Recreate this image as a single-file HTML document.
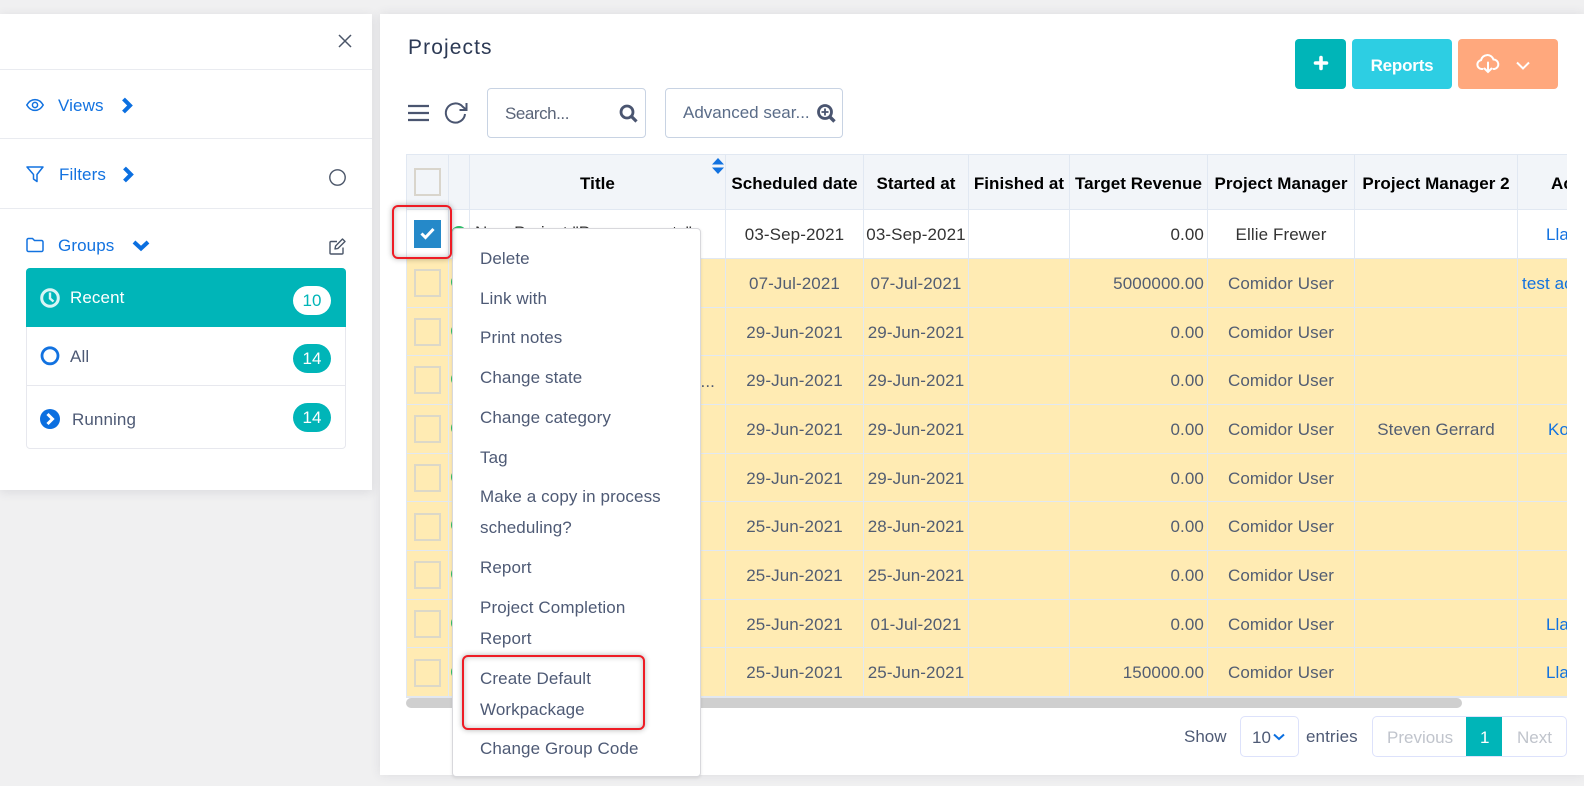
<!DOCTYPE html>
<html><head><meta charset="utf-8"><style>
*{box-sizing:border-box}
html,body{margin:0;padding:0;width:1584px;height:786px;overflow:hidden;background:#f0f0f1;font-family:"Liberation Sans",sans-serif;font-size:17px;letter-spacing:.1px;color:#4e5a75}
.a{position:absolute;white-space:nowrap;line-height:20px}
svg{position:absolute;overflow:visible}
#panel{position:absolute;left:0;top:14px;width:372px;height:476px;background:#fff;box-shadow:0 2px 10px rgba(60,60,80,.12)}
#main{position:absolute;left:380px;top:14px;width:1204px;height:761px;background:#fff;box-shadow:0 0 10px rgba(60,60,80,.1)}
.hr{position:absolute;left:0;width:372px;height:1px;background:#e9ebf0}
.blue{color:#1272e0}
.badge{position:absolute;left:293px;width:38px;height:29px;border-radius:14.5px;background:#00b5b8;color:#fff;text-align:center;line-height:29px;letter-spacing:0}
#tw{position:absolute;left:406px;top:154px;width:1161px;height:543px;overflow:hidden}
table{border-collapse:collapse;table-layout:fixed;width:1270px;position:absolute;left:0;top:0}
td,th{border:1px solid #e1e8f2;padding:0;text-align:center;white-space:nowrap;overflow:hidden;font-size:17px}
td{padding-top:2px}
th{background:#f2f5f9;color:#000;font-weight:700;height:55px;letter-spacing:.05px;padding-top:3px}
tr.w td{background:#fff;color:#333}
tr.y td{background:#ffebb3;color:#525d72}
td.r{text-align:right;padding-right:3px}
td.l{text-align:left;color:#1272e0!important}
.cb{position:absolute;left:414px;width:27px;height:28px;border:2px solid #dcd8c8;background:transparent}
.dot{position:absolute;left:451px;width:16px;height:16px;border-radius:50%;background:#2fbf6a}
#menu{position:absolute;left:452px;top:228px;width:249px;height:549px;background:#fff;border:1px solid #d8d8dc;border-radius:4px;box-shadow:0 1px 3px rgba(0,0,0,.1)}
.m{position:absolute;left:480px;white-space:nowrap;line-height:20px;color:#4e5a75}
.red{position:absolute;border:2px solid #ee1c25;border-radius:6px;box-shadow:0 0 6px rgba(0,0,0,.3),inset 0 0 6px rgba(0,0,0,.25)}
.btn{position:absolute;top:39px;height:50px;border-radius:4px;color:#fff;font-weight:700;text-align:center;line-height:53px}
.inp{position:absolute;top:88px;height:50px;border:1px solid #c8d3e3;border-radius:4px;background:#fff}
</style></head><body>
<div id="panel"></div>
<div class="hr" style="top:69px"></div><div class="hr" style="top:138px"></div><div class="hr" style="top:208px"></div>
<svg style="left:338px;top:34px" width="14" height="14" viewBox="0 0 14 14"><path d="M1 1L13 13M13 1L1 13" stroke="#4a5568" stroke-width="1.5" fill="none"/></svg>
<svg style="left:26px;top:97px" width="18" height="16" viewBox="0 0 18 16"><path d="M.8 8C3 4.2 5.8 2.6 9 2.6S15 4.2 17.2 8C15 11.8 12.2 13.400 9 13.400S3 11.800.8 8Z" fill="none" stroke="#1272e0" stroke-width="1.500"/><circle cx="9" cy="8" r="2.600" fill="none" stroke="#1272e0" stroke-width="1.500"/></svg>
<div class="a blue" style="left:58px;top:96px">Views</div>
<svg style="left:121px;top:97px" width="12" height="17" viewBox="0 0 12 17"><path d="M2.500 2L9 8.500L2.500 15" fill="none" stroke="#0b6fe0" stroke-width="4"/></svg>
<svg style="left:26px;top:166px" width="18" height="17" viewBox="0 0 18 17"><path d="M1 1H17L11 8.500V15.500L7.500 13V8.500Z" fill="none" stroke="#1272e0" stroke-width="1.500" stroke-linejoin="round"/></svg>
<div class="a blue" style="left:59px;top:165px">Filters</div>
<svg style="left:122px;top:166px" width="12" height="17" viewBox="0 0 12 17"><path d="M2.500 2L9 8.500L2.500 15" fill="none" stroke="#0b6fe0" stroke-width="4"/></svg>
<svg style="left:329px;top:169px" width="17" height="17" viewBox="0 0 17 17"><circle cx="8.500" cy="8.500" r="7.700" fill="none" stroke="#4a5568" stroke-width="1.400"/></svg>
<svg style="left:26px;top:237px" width="18" height="16" viewBox="0 0 18 16"><path d="M1 3A1.500 1.500 0 0 1 2.500 1.500H6.500L8.500 3.500H15.500A1.500 1.500 0 0 1 17 5V13A1.500 1.500 0 0 1 15.500 14.500H2.500A1.500 1.500 0 0 1 1 13Z" fill="none" stroke="#1272e0" stroke-width="1.500"/></svg>
<div class="a blue" style="left:58px;top:236px">Groups</div>
<svg style="left:132px;top:239px" width="18" height="13" viewBox="0 0 18 13"><path d="M2 3L9 9.500L16 3" fill="none" stroke="#0b6fe0" stroke-width="4"/></svg>
<svg style="left:329px;top:238px" width="17" height="17" viewBox="0 0 17 17"><path d="M14 9.500V15A1 1 0 0 1 13 16H2A1 1 0 0 1 1 15V4.500A1 1 0 0 1 2 3.500H8" fill="none" stroke="#4a5568" stroke-width="1.400"/><path d="M6 11L6.600 8L13.500 1L16 3.500L9 10.400Z" fill="none" stroke="#4a5568" stroke-width="1.400" stroke-linejoin="round"/></svg>

<div style="position:absolute;left:26px;top:268px;width:320px;height:181px;border:1px solid #e7e8ee;border-radius:4px"></div>
<div style="position:absolute;left:26px;top:268px;width:320px;height:59px;background:#00b5b8;border-radius:4px 4px 0 0"></div>
<div style="position:absolute;left:27px;top:385px;width:318px;height:1px;background:#e7e8ee"></div>
<svg style="left:40px;top:288px" width="20" height="20" viewBox="0 0 20 20"><circle cx="10" cy="10" r="8.300" fill="none" stroke="#d8f5f5" stroke-width="3"/><path d="M10 4.500V10.500L13.500 13.500" fill="none" stroke="#d8f5f5" stroke-width="2.400"/></svg>
<div class="a" style="left:70px;top:288px;color:#fff">Recent</div>
<div class="badge" style="top:286px;background:#fff;color:#00b5b8">10</div>
<svg style="left:40px;top:346px" width="20" height="20" viewBox="0 0 20 20"><circle cx="10" cy="9.800" r="8" fill="none" stroke="#1272e0" stroke-width="2.800"/></svg>
<div class="a" style="left:70px;top:347px">All</div>
<div class="badge" style="top:344px">14</div>
<svg style="left:40px;top:409px" width="20" height="20" viewBox="0 0 20 20"><circle cx="10" cy="10" r="10" fill="#0b6fe0"/><path d="M7.500 5L12.500 10L7.500 15" fill="none" stroke="#fff" stroke-width="3"/></svg>
<div class="a" style="left:72px;top:410px">Running</div>
<div class="badge" style="top:403px">14</div>

<div id="main"></div>
<div class="a" style="left:408px;top:38px;font-size:21px;letter-spacing:1.100px;color:#2d3a55">Projects</div>
<div class="btn" style="left:1295px;width:51px;background:#00b5b8"></div>
<svg style="left:1314px;top:56px" width="14" height="14" viewBox="0 0 14 14"><path d="M7 1.500V12.500M1.500 7H12.500" stroke="#fff" stroke-width="3.600" stroke-linecap="round"/></svg>
<div class="btn" style="left:1352px;width:100px;background:#2dcee3;letter-spacing:-.2px">Reports</div>
<div class="btn" style="left:1458px;width:100px;background:#ffa87d"></div>
<svg style="left:1476px;top:54px" width="24" height="20" viewBox="0 0 24 20"><path d="M6.500 15H5.500A4.500 4.500 0 0 1 5 6.100A6.500 6.500 0 0 1 17.500 5.500A4.800 4.800 0 0 1 18.500 15H17.500" fill="none" stroke="#fff" stroke-width="2" stroke-linecap="round"/><path d="M12 8.500V17.800M8.500 14.500L12 18L15.500 14.500" fill="none" stroke="#fff" stroke-width="2" stroke-linecap="round"/></svg>
<svg style="left:1516px;top:61px" width="14" height="9" viewBox="0 0 14 9"><path d="M1 1.500L7 7.500L13 1.500" fill="none" stroke="#fff" stroke-width="2"/></svg>

<svg style="left:408px;top:104px" width="21" height="18" viewBox="0 0 21 18"><path d="M0 2H21M0 9H21M0 16H21" stroke="#4a5570" stroke-width="2.300"/></svg>
<svg style="left:444px;top:101px" width="25" height="24" viewBox="0 0 25 24"><path d="M21 13A9.600 9.600 0 1 1 18.500 5.500L22 8.500" fill="none" stroke="#4a5570" stroke-width="2"/><path d="M22.500 2V9H15.500" fill="none" stroke="#4a5570" stroke-width="2"/></svg>
<div class="inp" style="left:487px;width:159px"></div>
<div class="a" style="left:505px;top:104px;color:#5a6478;letter-spacing:-.45px">Search...</div>
<svg style="left:619px;top:104px" width="19" height="19" viewBox="0 0 19 19"><circle cx="8" cy="8" r="6" fill="none" stroke="#4a5570" stroke-width="2.800"/><path d="M12.500 12.500L17.500 17.500" stroke="#4a5570" stroke-width="3.200"/></svg>
<div class="inp" style="left:665px;width:178px"></div>
<div class="a" style="left:683px;top:103px;color:#5a6c88;letter-spacing:0">Advanced sear...</div>
<svg style="left:817px;top:104px" width="19" height="19" viewBox="0 0 19 19"><circle cx="8" cy="8" r="6.500" fill="none" stroke="#4a5570" stroke-width="2.800"/><path d="M12.500 12.500L17.500 17.500" stroke="#4a5570" stroke-width="3.400"/><path d="M8 4.500V11.500M4.500 8H11.500" stroke="#4a5570" stroke-width="1.800"/></svg>

<div id="tw"><table>
<colgroup><col style="width:42px"><col style="width:21px"><col style="width:256px"><col style="width:138px"><col style="width:105px"><col style="width:101px"><col style="width:138px"><col style="width:147px"><col style="width:163px"><col style="width:159px"></colgroup>
<tr><th></th><th></th><th>Title</th><th>Scheduled date</th><th>Started at</th><th>Finished at</th><th>Target Revenue</th><th>Project Manager</th><th>Project Manager 2</th><th style="text-align:left;padding-left:33px">Actions</th></tr>
<tr class="w" style="height:49px"><td></td><td></td><td style="text-align:left;padding-left:5px;padding-top:0;padding-bottom:3px">New Project "Procurements"</td><td>03-Sep-2021</td><td>03-Sep-2021</td><td></td><td class="r">0.00</td><td>Ellie Frewer</td><td></td><td class="l" style="padding-left:28px">Llanos</td></tr>
<tr class="y" style="height:49px"><td></td><td></td><td></td><td>07-Jul-2021</td><td>07-Jul-2021</td><td></td><td class="r">5000000.00</td><td>Comidor User</td><td></td><td class="l" style="padding-left:4px">test account</td></tr>
<tr class="y" style="height:48px"><td></td><td></td><td></td><td>29-Jun-2021</td><td>29-Jun-2021</td><td></td><td class="r">0.00</td><td>Comidor User</td><td></td><td></td></tr>
<tr class="y" style="height:49px"><td></td><td></td><td style="text-align:right;padding-right:10px;padding-top:4px">...</td><td>29-Jun-2021</td><td>29-Jun-2021</td><td></td><td class="r">0.00</td><td>Comidor User</td><td></td><td></td></tr>
<tr class="y" style="height:49px"><td></td><td></td><td></td><td>29-Jun-2021</td><td>29-Jun-2021</td><td></td><td class="r">0.00</td><td>Comidor User</td><td>Steven Gerrard</td><td class="l" style="padding-left:30px">Kostas</td></tr>
<tr class="y" style="height:48px"><td></td><td></td><td></td><td>29-Jun-2021</td><td>29-Jun-2021</td><td></td><td class="r">0.00</td><td>Comidor User</td><td></td><td></td></tr>
<tr class="y" style="height:49px"><td></td><td></td><td></td><td>25-Jun-2021</td><td>28-Jun-2021</td><td></td><td class="r">0.00</td><td>Comidor User</td><td></td><td></td></tr>
<tr class="y" style="height:49px"><td></td><td></td><td></td><td>25-Jun-2021</td><td>25-Jun-2021</td><td></td><td class="r">0.00</td><td>Comidor User</td><td></td><td></td></tr>
<tr class="y" style="height:48px"><td></td><td></td><td></td><td>25-Jun-2021</td><td>01-Jul-2021</td><td></td><td class="r">0.00</td><td>Comidor User</td><td></td><td class="l" style="padding-left:28px">Llanos</td></tr>
<tr class="y" style="height:49px"><td></td><td></td><td></td><td>25-Jun-2021</td><td>25-Jun-2021</td><td></td><td class="r">150000.00</td><td>Comidor User</td><td></td><td class="l" style="padding-left:28px">Llanos</td></tr>
</table></div>
<svg style="left:711px;top:158px" width="14" height="16" viewBox="0 0 14 16"><path d="M7 0L13 6.500H1ZM1 9.500H13L7 16Z" fill="#1272e0"/></svg>

<div class="cb" style="top:168px;border-color:#d9d5cc"></div>
<div class="cb" style="top:220px;background:#2589c9;border-color:#2589c9"></div>
<svg style="left:420px;top:227px" width="15" height="13" viewBox="0 0 15 13"><path d="M1.500 6.500L5.500 10.500L13.500 2" fill="none" stroke="#fff" stroke-width="3"/></svg>
<div class="cb" style="top:269px"></div><div class="cb" style="top:318px"></div><div class="cb" style="top:366px"></div><div class="cb" style="top:415px"></div><div class="cb" style="top:464px"></div><div class="cb" style="top:513px"></div><div class="cb" style="top:561px"></div><div class="cb" style="top:610px"></div><div class="cb" style="top:659px"></div>
<div class="dot" style="top:226px"></div><div class="dot" style="top:274px"></div><div class="dot" style="top:323px"></div><div class="dot" style="top:371px"></div><div class="dot" style="top:420px"></div><div class="dot" style="top:469px"></div><div class="dot" style="top:517px"></div><div class="dot" style="top:566px"></div><div class="dot" style="top:615px"></div><div class="dot" style="top:664px"></div>

<div style="position:absolute;left:406px;top:697px;width:1161px;height:1px;background:#e3e7ee"></div>
<div style="position:absolute;left:406px;top:698px;width:1056px;height:10px;background:#cfcfcf;border-radius:5px"></div>

<div class="a" style="left:1184px;top:727px;letter-spacing:0">Show</div>
<div style="position:absolute;left:1240px;top:716px;width:59px;height:41px;border:1px solid #dde2fb;border-radius:5px"></div>
<div class="a" style="left:1252px;top:728px;letter-spacing:0">10</div>
<svg style="left:1273px;top:733px" width="12" height="8" viewBox="0 0 12 8"><path d="M1 1.500L6 6L11 1.500" fill="none" stroke="#0b6fe0" stroke-width="2"/></svg>
<div class="a" style="left:1306px;top:727px;letter-spacing:.1px">entries</div>
<div style="position:absolute;left:1372px;top:716px;width:195px;height:41px;border:1px solid #dde2fb;border-radius:5px"></div>
<div style="position:absolute;left:1466px;top:717px;width:36px;height:39px;background:#00b5b8"></div>
<div class="a" style="left:1387px;top:728px;color:#c0c4cc;letter-spacing:0">Previous</div>
<div class="a" style="left:1480px;top:728px;color:#fff;letter-spacing:0">1</div>
<div class="a" style="left:1517px;top:728px;color:#c0c4cc;letter-spacing:0">Next</div>

<div id="menu"></div>
<div class="m" style="top:249px">Delete</div>
<div class="m" style="top:289px">Link with</div>
<div class="m" style="top:328px">Print notes</div>
<div class="m" style="top:368px">Change state</div>
<div class="m" style="top:408px">Change category</div>
<div class="m" style="top:448px">Tag</div>
<div class="m" style="top:487px">Make a copy in process</div>
<div class="m" style="top:518px">scheduling?</div>
<div class="m" style="top:558px">Report</div>
<div class="m" style="top:598px">Project Completion</div>
<div class="m" style="top:629px">Report</div>
<div class="red" style="left:392px;top:205px;width:60px;height:54px"></div>
<div class="red" style="left:462px;top:655px;width:183px;height:75px;background:#fff"></div>
<div class="m" style="top:669px">Create Default</div>
<div class="m" style="top:700px">Workpackage</div>
<div class="m" style="top:739px">Change Group Code</div>
</body></html>
